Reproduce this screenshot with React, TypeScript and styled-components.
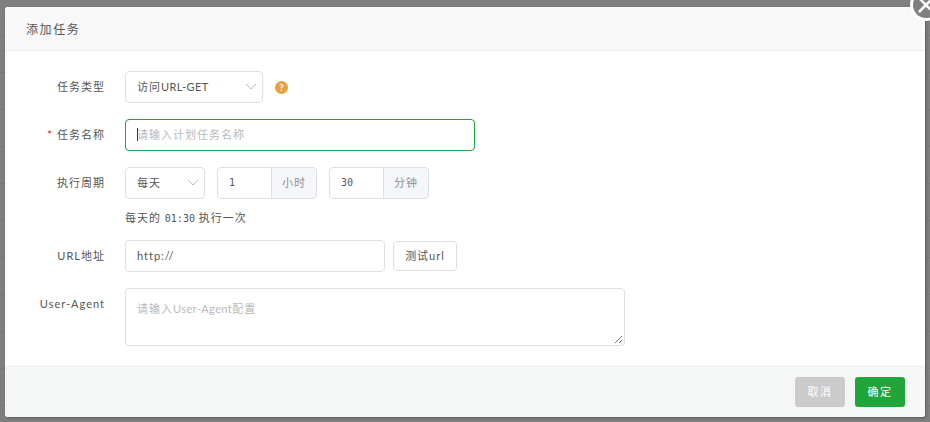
import * as React from 'react';
import styled, { createGlobalStyle } from 'styled-components';

const GlobalStyles = createGlobalStyle`
  html, body {
    margin: 0;
    padding: 0;
    overflow: hidden;
  }
  * {
    box-sizing: border-box;
  }
  body {
    font-family: Lato, "Noto Sans CJK SC", sans-serif;
    font-size: 11px;
    letter-spacing: 1px;
    color: #555;
  }
`;

const Backdrop = styled.div`
  width: 930px;
  height: 422px;
  padding: 7px 5px 5px;
  background-color: #7f7f7f;
  background-image: repeating-linear-gradient(
    to bottom,
    transparent 0,
    transparent 35px,
    #777 35px,
    #777 36px,
    transparent 36px,
    transparent 37px
  );
`;

const Modal = styled.div`
  position: relative;
  display: flex;
  flex-direction: column;
  width: 920px;
  height: 410px;
  background: #fff;
  border-radius: 3px;
  box-shadow: 1px 1px 3px rgba(0, 0, 0, 0.3);
`;

const CloseButton = styled.div`
  position: absolute;
  top: -18px;
  right: -17px;
  width: 32px;
  height: 32px;
  display: flex;
  align-items: center;
  justify-content: center;
  border: 3px solid #fff;
  border-radius: 50%;
  background: #7f7f7f;
`;

const Header = styled.div`
  height: 44px;
  padding-left: 21px;
  display: flex;
  align-items: center;
  background: #f8f8f8;
  border-bottom: 1px solid #eee;
  border-radius: 3px 3px 0 0;
  font-size: 12px;
  letter-spacing: 1.6px;
`;

const Body = styled.div`
  flex: 1;
  padding-top: 20px;
`;

const Row = styled.div<{ $gap?: number }>`
  display: flex;
  align-items: flex-start;
  margin-bottom: ${p => p.$gap ?? 16}px;
`;

const Label = styled.label`
  width: 100px;
  flex: none;
  height: 32px;
  line-height: 32px;
  text-align: right;
`;

const Required = styled.span`
  color: #ef0808;
  margin-right: 4px;
`;

const Controls = styled.div`
  margin-left: 20px;
  display: flex;
  align-items: center;
`;

const Select = styled.div<{ $width: number }>`
  position: relative;
  width: ${p => p.$width}px;
  height: 32px;
  padding-left: 11px;
  line-height: 30px;
  background: #fff;
  border: 1px solid #dcdfe6;
  border-radius: 4px;
`;

const Arrow = styled.svg`
  position: absolute;
  right: 5px;
  top: 11px;
`;

const Tight = styled.span`
  letter-spacing: 0.4px;
`;

const Help = styled.span`
  margin-left: 12px;
  width: 13px;
  height: 13px;
  border-radius: 50%;
  background: #e9a23b;
  color: #fff;
  font-size: 10px;
  font-weight: 700;
  letter-spacing: 0;
  line-height: 13px;
  text-align: center;
`;

const Input = styled.div<{ $width: number; $focus?: boolean }>`
  width: ${p => p.$width}px;
  height: 32px;
  padding-left: 11px;
  line-height: 30px;
  background: #fff;
  border: 1px solid ${p => (p.$focus ? '#20a53a' : '#dcdfe6')};
  border-radius: 4px;
`;

const Placeholder = styled.span`
  color: #b9b9b9;
`;

const Caret = styled.span`
  display: inline-block;
  width: 1px;
  height: 13px;
  margin-right: -1px;
  vertical-align: -2px;
  background: #333;
`;

const UnitInput = styled.div`
  display: flex;
  width: 100px;
  height: 32px;
  margin-left: 12px;
  border: 1px solid #dcdfe6;
  border-radius: 4px;
  overflow: hidden;
`;

const UnitValue = styled.div`
  flex: 1;
  padding-left: 11px;
  line-height: 29px;
  font-family: "DejaVu Sans Mono", monospace;
  font-size: 10px;
  letter-spacing: 0;
`;

const Unit = styled.div`
  width: 45px;
  text-align: center;
  line-height: 30px;
  background: #f5f6fa;
  border-left: 1px solid #dcdfe6;
  color: #8a8f99;
`;

const Hint = styled.div`
  margin: -5px 0 14px 120px;
  height: 16px;
  line-height: 16px;
`;

const Mono = styled.span`
  font-family: "DejaVu Sans Mono", monospace;
  font-size: 10px;
  letter-spacing: 0;
`;

const GhostButton = styled.div`
  width: 64px;
  height: 30px;
  margin-left: 8px;
  line-height: 28px;
  text-align: center;
  background: #fff;
  border: 1px solid #dcdfe6;
  border-radius: 4px;
`;

const TextArea = styled.div`
  position: relative;
  width: 500px;
  height: 58px;
  padding: 11px;
  line-height: 18px;
  border: 1px solid #dcdfe6;
  border-radius: 4px;
`;

const Grip = styled.svg`
  position: absolute;
  right: 1px;
  bottom: 1px;
`;

const Footer = styled.div`
  height: 51px;
  padding-right: 20px;
  display: flex;
  align-items: center;
  justify-content: flex-end;
  gap: 10px;
  background: #f5f7f7;
  border-top: 1px solid #eee;
  border-radius: 0 0 3px 3px;
`;

const FooterButton = styled.div<{ $primary?: boolean }>`
  width: 50px;
  height: 30px;
  line-height: 30px;
  text-align: center;
  border-radius: 3px;
  letter-spacing: 1.5px;
  color: #fff;
  background: ${p => (p.$primary ? '#20a53a' : '#cbcbcb')};
`;

const SelectArrow = () => (
  <Arrow width="12" height="8" viewBox="0 0 12 8" fill="none" stroke="#b9bcc4" strokeWidth="1">
    <path d="M1 1l5 5 5-5" />
  </Arrow>
);

const App: React.FC = () => (
  <>
    <GlobalStyles />
    <Backdrop>
      <Modal>
        <CloseButton>
          <svg width="18" height="18" viewBox="0 0 18 18" stroke="#fff" strokeWidth="2.6" fill="none">
            <path d="M2 2l14 14M16 2L2 16" />
          </svg>
        </CloseButton>
        <Header>添加任务</Header>
        <Body>
          <Row>
            <Label>任务类型</Label>
            <Controls>
              <Select $width={138}>
                访问<Tight>URL-GET</Tight>
                <SelectArrow />
              </Select>
              <Help>?</Help>
            </Controls>
          </Row>
          <Row>
            <Label>
              <Required>*</Required>任务名称
            </Label>
            <Controls>
              <Input $width={350} $focus>
                <Caret />
                <Placeholder>请输入计划任务名称</Placeholder>
              </Input>
            </Controls>
          </Row>
          <Row>
            <Label>执行周期</Label>
            <Controls>
              <Select $width={80}>
                每天
                <SelectArrow />
              </Select>
              <UnitInput>
                <UnitValue>1</UnitValue>
                <Unit>小时</Unit>
              </UnitInput>
              <UnitInput>
                <UnitValue>30</UnitValue>
                <Unit>分钟</Unit>
              </UnitInput>
            </Controls>
          </Row>
          <Hint>
            每天的 <Mono>01:30</Mono> 执行一次
          </Hint>
          <Row>
            <Label>URL地址</Label>
            <Controls>
              <Input $width={260}>http://</Input>
              <GhostButton>测试url</GhostButton>
            </Controls>
          </Row>
          <Row $gap={0}>
            <Label>User-Agent</Label>
            <Controls>
              <TextArea>
                <Placeholder>
                  请输入<Tight>User-Agent</Tight>配置
                </Placeholder>
                <Grip width="9" height="9" viewBox="0 0 9 9" stroke="#777" strokeWidth="1">
                  <path d="M1 8l7-7M5 8l3-3" />
                </Grip>
              </TextArea>
            </Controls>
          </Row>
        </Body>
        <Footer>
          <FooterButton>取消</FooterButton>
          <FooterButton $primary>确定</FooterButton>
        </Footer>
      </Modal>
    </Backdrop>
  </>
);

export default App;
